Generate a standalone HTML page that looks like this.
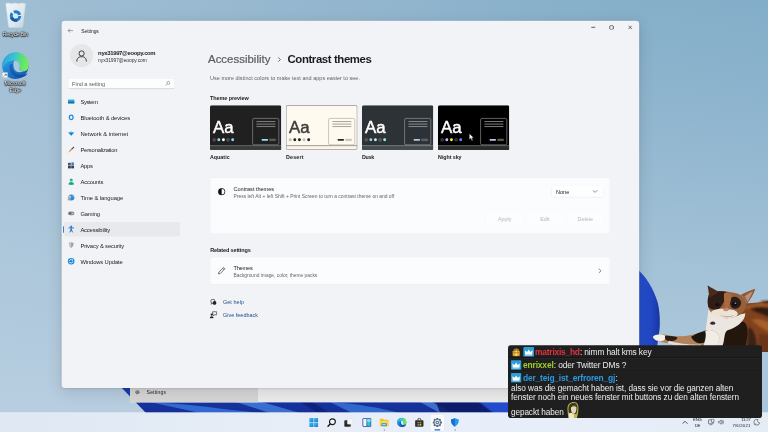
<!DOCTYPE html>
<html lang="en"><head><meta charset="utf-8"><title>Settings - Contrast themes</title>
<style>
html,body{margin:0;padding:0;width:768px;height:432px;overflow:hidden;background:#9dbdd4;}
#root{position:absolute;left:0;top:0;width:1920px;height:1080px;transform:scale(0.4);transform-origin:0 0;overflow:hidden;
font-family:"Liberation Sans",sans-serif;}
.b{position:absolute;box-sizing:border-box;}
.t{position:absolute;white-space:nowrap;}
#clip{position:relative;width:768px;height:432px;overflow:hidden;}
</style></head><body><div id="clip"><div id="root">
<svg class="b" style="left:0;top:0" width="1920" height="1080" viewBox="0 0 768 432">
<defs>
<linearGradient id="wp" x1="0" y1="0" x2="1" y2="0">
<stop offset="0" stop-color="#a0bed4"/><stop offset="0.45" stop-color="#93b6ce"/><stop offset="0.8" stop-color="#85afc9"/><stop offset="1" stop-color="#82adc8"/>
</linearGradient>
<linearGradient id="wp2" x1="0" y1="0" x2="0" y2="1">
<stop offset="0" stop-color="#b4cce0" stop-opacity="0"/><stop offset="0.25" stop-color="#b4cce0" stop-opacity="0.24"/><stop offset="0.65" stop-color="#b6cde0" stop-opacity="0.66"/><stop offset="1" stop-color="#bcd1e2" stop-opacity="0.92"/>
</linearGradient>
<linearGradient id="pet" x1="0" y1="0" x2="1" y2="0">
<stop offset="0" stop-color="#2a55d2"/><stop offset="0.7" stop-color="#2148c4"/><stop offset="1" stop-color="#1736a0"/>
</linearGradient>
<linearGradient id="strip" x1="0" y1="0" x2="0" y2="1">
<stop offset="0" stop-color="#1c3fb4"/><stop offset="1" stop-color="#142e94"/>
</linearGradient>
</defs>
<rect width="768" height="432" fill="url(#wp)"/>
<rect width="768" height="432" fill="url(#wp2)"/>
<path d="M118,384 L146,413 L768,413 L768,384 Z" fill="url(#strip)"/>
<path d="M150,402 C190,404 230,410 260,413 L200,413 Z" fill="#3a78e0" opacity="0.8"/>
<path d="M236,402 L262,402 L300,413 L270,413 Z" fill="#4a8ae8" opacity="0.7"/>
<path d="M300,402 L312,402 L330,413 L318,413 Z" fill="#0c1f70" opacity="0.7"/>
<path d="M330,402 C360,404 380,408 400,413 L352,413 Z" fill="#3f7fe4" opacity="0.7"/>
<path d="M420,402 L432,402 L452,413 L440,413 Z" fill="#5a96ec" opacity="0.6"/>
<path d="M436,402 L478,402 L492,413 L440,413 Z" fill="#0c1a64" opacity="0.85"/><path d="M480,402 L510,402 L510,413 L494,413 Z" fill="#2350d0" opacity="0.9"/>
<path d="M634,266.5 C646,275 654,290 657.7,302.4 C660,312 660.6,326 658.9,334 C657,348 652,380 648,413 L630,413 Z" fill="url(#pet)"/>
<path d="M762,345 L768,345 L768,413 L762,413 Z" fill="#a9c6dc"/>
</svg>
<svg class="b" style="left:10.00px;top:5.00px;" width="60.00" height="65.00" viewBox="0 0 96 104">
<defs><linearGradient id="rb" x1="0" y1="0" x2="1" y2="1"><stop offset="0" stop-color="#f2f6f9"/><stop offset="0.6" stop-color="#dfe7ed"/><stop offset="1" stop-color="#c4d0da"/></linearGradient></defs>
<path d="M7,6 L18,4 L30,7 L44,4 L58,7 L72,4 L86,7 L75,98 Q74,102 69,102 L24,102 Q19,102 18,98 Z" fill="url(#rb)" stroke="#d4dee6" stroke-width="1.5"/>
<circle cx="46" cy="56" r="17" fill="none" stroke="#1a7fd8" stroke-width="12" stroke-dasharray="28 7.6"/>
<path d="M30,62 A17,17 0 0 0 52,72" fill="none" stroke="#0c5aa8" stroke-width="12"/>
</svg>
<span id="t0" class="t" style="left:38.00px;transform:translateX(-50%);top:77.64px;font-size:13.25px;line-height:17.22px;font-weight:400;color:#fff;letter-spacing:-0.679px;text-shadow:0 0 3px #000,0 1px 3px #000,0 0 2px #000,0 0 4px rgba(0,0,0,0.8);">Recycle Bin</span>
<svg class="b" style="left:3.75px;top:130.00px;" width="68.75" height="68.75" viewBox="0 0 100 100">
<defs>
<linearGradient id="eg1" x1="0" y1="0" x2="0.6" y2="1"><stop offset="0" stop-color="#34b4e4"/><stop offset="0.5" stop-color="#2488d8"/><stop offset="1" stop-color="#155cb4"/></linearGradient>
<linearGradient id="eg2" x1="0" y1="0.3" x2="1" y2="0.5"><stop offset="0" stop-color="#2aa4dc"/><stop offset="0.42" stop-color="#3cc4d0"/><stop offset="0.72" stop-color="#5ce074"/><stop offset="1" stop-color="#78ec5c"/></linearGradient>
<linearGradient id="eg3" x1="0" y1="0" x2="1" y2="1"><stop offset="0" stop-color="#1a6cc4"/><stop offset="1" stop-color="#0c4494"/></linearGradient>
</defs>
<circle cx="50" cy="50" r="48" fill="url(#eg1)"/>
<path d="M3,44 C10,15 30,1 52,1 C80,1 99,22 99,46 C99,60 92,69 80,70 C68,71 62,64 66,56 C70,46 62,31 44,31 C26,31 10,42 3,62 Z" fill="url(#eg2)"/>
<path d="M30,46 C24,68 40,92 66,93 C80,93 90,86 95,76 C84,85 66,86 53,78 C41,70 37,56 42,42 Z" fill="url(#eg3)"/>
<path d="M46,32 C60,30 70,44 66,56 C62,64 68,71 80,70 C70,77 52,75 46,62 C42,52 42,40 46,32 Z" fill="#a9c8de"/>
</svg>
<div class="b" style="left:5.00px;top:181.25px;width:13.75px;height:13.75px;background:#fff;border:1px solid #999;"></div>
<svg class="b" style="left:6.50px;top:182.75px;" width="11.00" height="11.00" viewBox="0 0 10 10"><path d="M2,8 L8,2 M4,2 L8,2 L8,6" stroke="#1b5fc0" stroke-width="1.6" fill="none"/></svg>
<span id="t1" class="t" style="left:37.50px;transform:translateX(-50%);top:199.89px;font-size:13.25px;line-height:17.22px;font-weight:400;color:#fff;letter-spacing:-0.139px;text-shadow:0 0 3px #000,0 1px 3px #000,0 0 2px #000,0 0 4px rgba(0,0,0,0.8);">Microsoft</span>
<span id="t2" class="t" style="left:37.50px;transform:translateX(-50%);top:215.64px;font-size:13.25px;line-height:17.22px;font-weight:400;color:#fff;letter-spacing:-0.863px;text-shadow:0 0 3px #000,0 1px 3px #000,0 0 2px #000,0 0 4px rgba(0,0,0,0.8);">Edge</span>
<div class="b" style="left:325.00px;top:950.00px;width:1325.00px;height:55.50px;background:#ececec;"></div>
<div class="b" style="left:325.00px;top:950.00px;width:320.00px;height:55.50px;background:#d6d6d6;"></div>
<svg class="b" style="left:336.50px;top:973.50px;" width="13.00" height="13.00" viewBox="0 0 20 20"><circle cx="10" cy="10" r="6.5" fill="none" stroke="#333" stroke-width="2.4" stroke-dasharray="3.2 1.9"/><circle cx="10" cy="10" r="5" fill="none" stroke="#333" stroke-width="1.6"/><circle cx="10" cy="10" r="1.8" fill="none" stroke="#333" stroke-width="1.4"/></svg>
<span id="t3" class="t" style="left:366.50px;top:972.12px;font-size:12.50px;line-height:16.25px;font-weight:400;color:#222;letter-spacing:0.479px;">Settings</span>
<div class="b" style="left:153.50px;top:51.75px;width:1444.50px;height:918.25px;background:#f1f3f6;border-radius:8px;box-shadow:0 10px 40px rgba(0,0,0,0.12),0 2px 8px rgba(0,0,0,0.06),0 0 0 1px rgba(110,130,150,0.15);"></div>
<svg class="b" style="left:169.00px;top:71.00px;" width="14.00" height="11.00" viewBox="0 0 14 11"><path d="M6,1 L1.5,5.5 L6,10 M1.5,5.5 L13,5.5" fill="none" stroke="#444" stroke-width="1.2" stroke-linecap="round" stroke-linejoin="round"/></svg>
<span id="t4" class="t" style="left:203.00px;top:70.54px;font-size:12.25px;line-height:15.93px;font-weight:400;color:#1b1b1b;letter-spacing:-0.033px;">Settings</span>
<svg class="b" style="left:1476.50px;top:61.50px;" width="12.50" height="12.50" viewBox="0 0 10 10"><path d="M1,5 L9,5" stroke="#2a2a2a" stroke-width="1.5"/></svg>
<svg class="b" style="left:1523.25px;top:62.50px;" width="11.50" height="11.50" viewBox="0 0 10 10"><rect x="1" y="1" width="8" height="8" rx="1.8" fill="none" stroke="#2a2a2a" stroke-width="1.7"/></svg>
<svg class="b" style="left:1570.00px;top:62.50px;" width="11.00" height="11.00" viewBox="0 0 10 10"><path d="M1,1 L9,9 M9,1 L1,9" stroke="#2a2a2a" stroke-width="1.5"/></svg>
<div class="b" style="left:175.00px;top:110.00px;width:57.50px;height:57.50px;background:#e4e6e8;border-radius:50%;"></div>
<svg class="b" style="left:188.75px;top:122.50px;" width="30.00" height="32.50" viewBox="0 0 24 26"><circle cx="12" cy="8.5" r="5.2" fill="none" stroke="#2a2a2a" stroke-width="1.8"/><path d="M2.5,24 C2.5,17.5 6.5,15 12,15 C17.5,15 21.5,17.5 21.5,24" fill="none" stroke="#2a2a2a" stroke-width="1.8" stroke-linecap="round"/></svg>
<span id="t5" class="t" style="left:245.25px;top:122.66px;font-size:14.75px;line-height:19.18px;font-weight:700;color:#1b1b1b;letter-spacing:-0.811px;">nyx31997@eoopy.com</span>
<span id="t6" class="t" style="left:245.25px;top:143.04px;font-size:12.25px;line-height:15.93px;font-weight:400;color:#333;letter-spacing:-0.171px;">nyx31997@eoopy.com</span>
<div class="b" style="left:170.75px;top:195.75px;width:264.75px;height:26.25px;background:#fdfdfe;border-radius:4px;border-bottom:1.5px solid #8a8d91;box-shadow:0 0 0 1px rgba(0,0,0,0.05);"></div>
<span id="t7" class="t" style="left:180.25px;top:199.90px;font-size:14.00px;line-height:18.20px;font-weight:400;color:#5c5f63;letter-spacing:-0.111px;">Find a setting</span>
<svg class="b" style="left:413.00px;top:202.25px;" width="13.00" height="13.00" viewBox="0 0 12 12"><circle cx="7.2" cy="4.8" r="3.4" fill="none" stroke="#555" stroke-width="1"/><path d="M4.8,7.2 L1.2,10.8" stroke="#555" stroke-width="1" stroke-linecap="round"/></svg>
<div class="b" style="left:159.00px;top:555.00px;width:290.50px;height:35.50px;background:#e7e9ed;border-radius:4px;"></div>
<div class="b" style="left:157.75px;top:565.00px;width:2.50px;height:16.50px;background:#1a5fb4;border-radius:2px;"></div>
<span id="t8" class="t" style="left:201.00px;top:245.95px;font-size:14.50px;line-height:18.85px;font-weight:400;color:#1b1b1b;letter-spacing:-0.849px;">System</span>
<span id="t9" class="t" style="left:201.00px;top:285.88px;font-size:14.50px;line-height:18.85px;font-weight:400;color:#1b1b1b;letter-spacing:-0.219px;">Bluetooth &amp; devices</span>
<span id="t10" class="t" style="left:201.00px;top:325.80px;font-size:14.50px;line-height:18.85px;font-weight:400;color:#1b1b1b;letter-spacing:-0.002px;">Network &amp; internet</span>
<span id="t11" class="t" style="left:201.00px;top:365.72px;font-size:14.50px;line-height:18.85px;font-weight:400;color:#1b1b1b;letter-spacing:-0.460px;">Personalization</span>
<span id="t12" class="t" style="left:201.00px;top:405.65px;font-size:14.50px;line-height:18.85px;font-weight:400;color:#1b1b1b;letter-spacing:-0.578px;">Apps</span>
<span id="t13" class="t" style="left:201.00px;top:445.57px;font-size:14.50px;line-height:18.85px;font-weight:400;color:#1b1b1b;letter-spacing:-0.301px;">Accounts</span>
<span id="t14" class="t" style="left:201.00px;top:485.50px;font-size:14.50px;line-height:18.85px;font-weight:400;color:#1b1b1b;letter-spacing:-0.139px;">Time &amp; language</span>
<span id="t15" class="t" style="left:201.00px;top:525.42px;font-size:14.50px;line-height:18.85px;font-weight:400;color:#1b1b1b;letter-spacing:-0.381px;">Gaming</span>
<span id="t16" class="t" style="left:201.00px;top:565.35px;font-size:14.50px;line-height:18.85px;font-weight:400;color:#1b1b1b;letter-spacing:-0.382px;">Accessibility</span>
<span id="t17" class="t" style="left:201.00px;top:605.28px;font-size:14.50px;line-height:18.85px;font-weight:400;color:#1b1b1b;letter-spacing:-0.346px;">Privacy &amp; security</span>
<span id="t18" class="t" style="left:201.00px;top:645.20px;font-size:14.50px;line-height:18.85px;font-weight:400;color:#1b1b1b;letter-spacing:-0.294px;">Windows Update</span>
<svg class="b" style="left:167.50px;top:244.00px;" width="20.00" height="20.00" viewBox="0 0 20 20"><defs><linearGradient id="ni0" x1="0" y1="0" x2="0" y2="1"><stop offset="0" stop-color="#35c4dc"/><stop offset="1" stop-color="#0c78c0"/></linearGradient></defs><rect x="2" y="4.5" width="16" height="9.5" rx="1" fill="url(#ni0)"/><rect x="2" y="12.2" width="16" height="2.2" fill="#0a5a9c"/></svg>
<svg class="b" style="left:167.50px;top:283.92px;" width="20.00" height="20.00" viewBox="0 0 20 20"><rect x="5.4" y="3.6" width="9.2" height="11.4" rx="4.6" fill="#e8f2fc" stroke="#1a86e0" stroke-width="3.2"/></svg>
<svg class="b" style="left:167.50px;top:323.85px;" width="20.00" height="20.00" viewBox="0 0 20 20"><path d="M3,7.6 Q10,3.2 17,7.6 L10,15.2 Z" fill="#1a78d0"/><path d="M3,7.6 Q10,3.2 17,7.6 L15,9.8 Q10,6.8 5,9.8 Z" fill="#3cbcec"/></svg>
<svg class="b" style="left:167.50px;top:363.77px;" width="20.00" height="20.00" viewBox="0 0 20 20"><path d="M16.5,2.5 L18,4 L12.5,9.5 L10.5,7.5 Z" fill="#3a4a6a"/><path d="M10.5,7.5 L12.5,9.5 L8.5,13.5 L6.5,11.5 Z" fill="#c87838"/><path d="M6.5,11.5 L8.5,13.5 Q7,17 2.5,16.5 Q5,14.5 6.5,11.5 Z" fill="#f09838"/></svg>
<svg class="b" style="left:167.50px;top:403.70px;" width="20.00" height="20.00" viewBox="0 0 20 20"><rect x="2" y="3" width="7" height="6" fill="#50565e"/><rect x="2" y="10" width="7" height="7" fill="#3a4048"/><rect x="10" y="10" width="7" height="7" fill="#3a4048"/><rect x="10.5" y="2" width="6" height="7" fill="#2a7fd4"/></svg>
<svg class="b" style="left:167.50px;top:443.62px;" width="20.00" height="20.00" viewBox="0 0 20 20"><circle cx="10" cy="6" r="4" fill="#22b89a"/><path d="M3,17.5 Q3,11 10,11 Q17,11 17,17.5 Q10,19.5 3,17.5 Z" fill="#1aa888"/></svg>
<svg class="b" style="left:167.50px;top:483.55px;" width="20.00" height="20.00" viewBox="0 0 20 20"><circle cx="10.5" cy="9.5" r="7.5" fill="#2a88d8"/><path d="M4,6 Q8,3 10,7 Q11,11 7,13 Q3,12 4,6 Z" fill="#b0c4d4"/><path d="M12,3 Q17,5 17,10 Q14,9 12,3 Z" fill="#7fd0f0"/><circle cx="5" cy="14" r="3.5" fill="#9aa4ae"/></svg>
<svg class="b" style="left:167.50px;top:523.47px;" width="20.00" height="20.00" viewBox="0 0 20 20"><rect x="2" y="6" width="16" height="9" rx="4.5" fill="#8a9098"/><circle cx="7" cy="10.5" r="2" fill="#4a5058"/><circle cx="13.5" cy="10.5" r="1.6" fill="#c8ccd0"/></svg>
<svg class="b" style="left:167.50px;top:563.40px;" width="20.00" height="20.00" viewBox="0 0 20 20"><circle cx="10" cy="3.2" r="2.2" fill="#1a6fd4"/><path d="M4.6,6.8 L15.4,6.8 M10,6.8 L10,11.4 M10,11.4 L6.8,17 M10,11.4 L13.2,17" stroke="#1a6fd4" stroke-width="2.5" stroke-linecap="round" fill="none"/></svg>
<svg class="b" style="left:167.50px;top:603.33px;" width="20.00" height="20.00" viewBox="0 0 20 20"><path d="M10,2.6 L16.2,4.8 Q16.6,12.4 10,16.8 Q3.4,12.4 3.8,4.8 Z" fill="#9aa0a6"/><path d="M10,2.6 L10,16.8 Q3.4,12.4 3.8,4.8 Z" fill="#c4c8cc"/></svg>
<svg class="b" style="left:167.50px;top:643.25px;" width="20.00" height="20.00" viewBox="0 0 20 20"><circle cx="10" cy="10" r="8.2" fill="#1a86dc"/><path d="M5.5,10 A4.5,4.5 0 0 1 13.5,7.2 M14.5,10 A4.5,4.5 0 0 1 6.5,12.8" fill="none" stroke="#fff" stroke-width="1.8"/><path d="M14.2,4.5 L14,8 L10.8,7.4 Z M5.8,15.5 L6,12 L9.2,12.6 Z" fill="#fff"/></svg>
<span id="t19" class="t" style="left:520.00px;top:130.47px;font-size:28.50px;line-height:37.05px;font-weight:400;color:#5a5d61;letter-spacing:0.080px;-webkit-text-stroke:0.55px #5a5d61;">Accessibility</span>
<svg class="b" style="left:692.50px;top:141.75px;" width="11.00" height="13.75" viewBox="0 0 8 10"><path d="M2.4,1.6 L5.8,5 L2.4,8.4" fill="none" stroke="#4a4d51" stroke-width="1.5" stroke-linecap="round" stroke-linejoin="round"/></svg>
<span id="t20" class="t" style="left:718.75px;top:130.47px;font-size:28.50px;line-height:37.05px;font-weight:700;color:#1b1b1b;letter-spacing:-0.993px;">Contrast themes</span>
<span id="t21" class="t" style="left:525.00px;top:186.31px;font-size:13.75px;line-height:17.88px;font-weight:400;color:#5f6368;letter-spacing:0.046px;">Use more distinct colors to make text and apps easier to see.</span>
<span id="t22" class="t" style="left:525.00px;top:238.31px;font-size:13.75px;line-height:17.88px;font-weight:700;color:#1b1b1b;letter-spacing:-0.220px;">Theme preview</span>
<svg class="b" style="left:524.50px;top:263.00px;" width="178.50" height="111.50" viewBox="0 0 71.4 44.6"><rect x="0" y="0" width="71.4" height="44.6" rx="1.6" fill="#202020"/><rect x="0" y="40.4" width="71.4" height="4.2" fill="#3a3a3a"/><rect x="0" y="40.2" width="71.4" height="0.7" fill="#7a7a7a"/><rect x="42.6" y="13.2" width="26.2" height="26.4" rx="1.4" fill="#202020" stroke="#9a9a9a" stroke-width="0.6"/><rect x="46.4" y="15.95" width="19" height="0.9" fill="#8a8a8a"/><rect x="46.4" y="18.45" width="19" height="0.9" fill="#8a8a8a"/><rect x="46.4" y="20.95" width="19" height="0.9" fill="#8a8a8a"/><rect x="51.6" y="33.7" width="6.4" height="1.8" rx="0.6" fill="#8ee3f0"/><rect x="59.4" y="33.7" width="6.4" height="1.8" rx="0.6" fill="#555" stroke="#9a9a9a" stroke-width="0.25"/><circle cx="4.20" cy="34.6" r="1.25" fill="none" stroke="#aaa" stroke-width="0.45"/><circle cx="8.82" cy="34.6" r="1.45" fill="#8ee3f0"/><circle cx="13.44" cy="34.6" r="1.45" fill="#ffffff"/><circle cx="18.06" cy="34.6" r="1.25" fill="none" stroke="#aaa" stroke-width="0.45"/><circle cx="22.68" cy="34.6" r="1.45" fill="#75e0ef"/><text x="3.0" y="28.0" font-family="Liberation Sans, sans-serif" font-size="17.2" fill="#ffffff" stroke="#ffffff" stroke-width="0.45" textLength="20.6" lengthAdjust="spacingAndGlyphs">Aa</text></svg>
<span id="t23" class="t" style="left:525.00px;top:384.14px;font-size:13.25px;line-height:17.22px;font-weight:700;color:#1b1b1b;letter-spacing:0.058px;">Aquatic</span>
<svg class="b" style="left:714.50px;top:263.00px;filter:drop-shadow(0 0 1.2px rgba(0,0,0,0.55));" width="178.50" height="111.50" viewBox="0 0 71.4 44.6"><rect x="0" y="0" width="71.4" height="44.6" rx="1.6" fill="#fffaef"/><rect x="0" y="40.4" width="71.4" height="4.2" fill="#fbf6ea"/><rect x="0" y="40.2" width="71.4" height="0.7" fill="#7a766c"/><rect x="42.6" y="13.2" width="26.2" height="26.4" rx="1.4" fill="#fffaef" stroke="#a8a296" stroke-width="0.6"/><rect x="46.4" y="15.95" width="19" height="0.9" fill="#a09a8e"/><rect x="46.4" y="18.45" width="19" height="0.9" fill="#a09a8e"/><rect x="46.4" y="20.95" width="19" height="0.9" fill="#a09a8e"/><rect x="51.6" y="33.7" width="6.4" height="1.8" rx="0.6" fill="#2a2a2a"/><rect x="59.4" y="33.7" width="6.4" height="1.8" rx="0.6" fill="#d0cabc" stroke="#a8a296" stroke-width="0.25"/><circle cx="4.20" cy="34.6" r="1.25" fill="#d8d2c6" stroke="#a8a296" stroke-width="0.45"/><circle cx="8.82" cy="34.6" r="1.45" fill="#222"/><circle cx="13.44" cy="34.6" r="1.45" fill="#1a1a1a"/><circle cx="18.06" cy="34.6" r="1.25" fill="#d8d2c6" stroke="#a8a296" stroke-width="0.45"/><circle cx="22.68" cy="34.6" r="1.45" fill="#222"/><text x="3.0" y="28.0" font-family="Liberation Sans, sans-serif" font-size="17.2" fill="#3d3d3d" stroke="#3d3d3d" stroke-width="0.45" textLength="20.6" lengthAdjust="spacingAndGlyphs">Aa</text><rect x="0.3" y="0.3" width="70.8" height="44" rx="1.5" fill="none" stroke="#8c887e" stroke-width="0.6"/></svg>
<span id="t24" class="t" style="left:715.00px;top:384.14px;font-size:13.25px;line-height:17.22px;font-weight:700;color:#1b1b1b;letter-spacing:0.458px;">Desert</span>
<svg class="b" style="left:904.50px;top:263.00px;" width="178.50" height="111.50" viewBox="0 0 71.4 44.6"><rect x="0" y="0" width="71.4" height="44.6" rx="1.6" fill="#2d3236"/><rect x="0" y="40.4" width="71.4" height="4.2" fill="#454a4e"/><rect x="0" y="40.2" width="71.4" height="0.7" fill="#8a8f93"/><rect x="42.6" y="13.2" width="26.2" height="26.4" rx="1.4" fill="#2d3236" stroke="#a0a4a8" stroke-width="0.6"/><rect x="46.4" y="15.95" width="19" height="0.9" fill="#8f9498"/><rect x="46.4" y="18.45" width="19" height="0.9" fill="#8f9498"/><rect x="46.4" y="20.95" width="19" height="0.9" fill="#8f9498"/><rect x="51.6" y="33.7" width="6.4" height="1.8" rx="0.6" fill="#abcfef"/><rect x="59.4" y="33.7" width="6.4" height="1.8" rx="0.6" fill="#555a5e" stroke="#a0a4a8" stroke-width="0.25"/><circle cx="4.20" cy="34.6" r="1.25" fill="none" stroke="#aaa" stroke-width="0.45"/><circle cx="8.82" cy="34.6" r="1.45" fill="#a6cbec"/><circle cx="13.44" cy="34.6" r="1.45" fill="#b6f6f0"/><circle cx="18.06" cy="34.6" r="1.25" fill="none" stroke="#aaa" stroke-width="0.45"/><circle cx="22.68" cy="34.6" r="1.45" fill="#a0ead8"/><text x="3.0" y="28.0" font-family="Liberation Sans, sans-serif" font-size="17.2" fill="#ffffff" stroke="#ffffff" stroke-width="0.45" textLength="20.6" lengthAdjust="spacingAndGlyphs">Aa</text></svg>
<span id="t25" class="t" style="left:905.00px;top:384.14px;font-size:13.25px;line-height:17.22px;font-weight:700;color:#1b1b1b;letter-spacing:-0.602px;">Dusk</span>
<svg class="b" style="left:1094.75px;top:263.00px;" width="178.50" height="111.50" viewBox="0 0 71.4 44.6"><rect x="0" y="0" width="71.4" height="44.6" rx="1.6" fill="#000000"/><rect x="0" y="40.4" width="71.4" height="4.2" fill="#2a2a2a"/><rect x="0" y="40.2" width="71.4" height="0.7" fill="#7a7a7a"/><rect x="42.6" y="13.2" width="26.2" height="26.4" rx="1.4" fill="#000" stroke="#a0a0a0" stroke-width="0.6"/><rect x="46.4" y="15.95" width="19" height="0.9" fill="#8a8a8a"/><rect x="46.4" y="18.45" width="19" height="0.9" fill="#8a8a8a"/><rect x="46.4" y="20.95" width="19" height="0.9" fill="#8a8a8a"/><rect x="51.6" y="33.7" width="6.4" height="1.8" rx="0.6" fill="#d6b4fd"/><rect x="59.4" y="33.7" width="6.4" height="1.8" rx="0.6" fill="#5a5a3a" stroke="#a0a0a0" stroke-width="0.25"/><circle cx="4.20" cy="34.6" r="1.25" fill="none" stroke="#aaa" stroke-width="0.45"/><circle cx="8.82" cy="34.6" r="1.45" fill="#d6b4fd"/><circle cx="13.44" cy="34.6" r="1.45" fill="#ffee32"/><circle cx="18.06" cy="34.6" r="1.25" fill="none" stroke="#aaa" stroke-width="0.45"/><circle cx="22.68" cy="34.6" r="1.45" fill="#8080ff"/><text x="3.0" y="28.0" font-family="Liberation Sans, sans-serif" font-size="17.2" fill="#ffffff" stroke="#ffffff" stroke-width="0.45" textLength="20.6" lengthAdjust="spacingAndGlyphs">Aa</text></svg>
<span id="t26" class="t" style="left:1095.25px;top:384.14px;font-size:13.25px;line-height:17.22px;font-weight:700;color:#1b1b1b;letter-spacing:-0.127px;">Night sky</span>
<svg class="b" style="left:1171.50px;top:333.00px;" width="14.00" height="20.50" viewBox="0 0 12 18"><path d="M1,1 L1,14 L4.2,11 L6.6,16.6 L8.8,15.6 L6.4,10.2 L10.8,10 Z" fill="#fff" stroke="#222" stroke-width="0.9" stroke-linejoin="round"/></svg>
<div class="b" style="left:525.50px;top:444.50px;width:998.00px;height:139.50px;background:#fbfcfd;border-radius:4px;box-shadow:0 0 0 1px rgba(0,0,0,0.025);"></div>
<svg class="b" style="left:543.50px;top:468.50px;" width="20.50" height="20.50" viewBox="0 0 20 20"><circle cx="10" cy="10" r="8" fill="#fff" stroke="#111" stroke-width="2"/><path d="M10,2 A8,8 0 0 0 10,18 Z" fill="#111"/></svg>
<span id="t27" class="t" style="left:583.75px;top:463.03px;font-size:14.00px;line-height:18.20px;font-weight:400;color:#1b1b1b;letter-spacing:-0.081px;">Contrast themes</span>
<span id="t28" class="t" style="left:583.75px;top:482.63px;font-size:12.30px;line-height:15.99px;font-weight:400;color:#62666a;letter-spacing:0.030px;">Press left Alt + left Shift + Print Screen to turn a contrast theme on and off</span>
<div class="b" style="left:1378.50px;top:464.50px;width:129.50px;height:27.50px;background:#fefefe;border-radius:4px;box-shadow:0 0 0 1px rgba(0,0,0,0.02),0 1px 0 0.5px rgba(0,0,0,0.06);"></div>
<span id="t29" class="t" style="left:1390.00px;top:471.06px;font-size:13.75px;line-height:17.88px;font-weight:400;color:#1b1b1b;letter-spacing:0.094px;">None</span>
<svg class="b" style="left:1481.00px;top:474.00px;" width="13.50" height="9.50" viewBox="0 0 10 7"><path d="M1.4,1.6 L5,5.2 L8.6,1.6" fill="none" stroke="#444" stroke-width="1.1" stroke-linecap="round" stroke-linejoin="round"/></svg>
<div class="b" style="left:1215.00px;top:531.00px;width:93.50px;height:32.50px;background:#fcfdfe;border-radius:4px;box-shadow:0 0 0 1px rgba(0,0,0,0.018);"></div>
<span id="t30" class="t" style="left:1261.75px;transform:translateX(-50%);top:538.56px;font-size:13.75px;line-height:17.88px;font-weight:400;color:#b4b7ba;letter-spacing:-0.081px;">Apply</span>
<div class="b" style="left:1315.50px;top:531.00px;width:93.50px;height:32.50px;background:#fcfdfe;border-radius:4px;box-shadow:0 0 0 1px rgba(0,0,0,0.018);"></div>
<span id="t31" class="t" style="left:1362.25px;transform:translateX(-50%);top:538.56px;font-size:13.75px;line-height:17.88px;font-weight:400;color:#b4b7ba;letter-spacing:-0.051px;">Edit</span>
<div class="b" style="left:1417.50px;top:531.00px;width:91.50px;height:32.50px;background:#fcfdfe;border-radius:4px;box-shadow:0 0 0 1px rgba(0,0,0,0.018);"></div>
<span id="t32" class="t" style="left:1463.25px;transform:translateX(-50%);top:538.56px;font-size:13.75px;line-height:17.88px;font-weight:400;color:#b4b7ba;letter-spacing:-0.125px;">Delete</span>
<span id="t33" class="t" style="left:525.50px;top:616.31px;font-size:13.75px;line-height:17.88px;font-weight:700;color:#1b1b1b;letter-spacing:-0.326px;">Related settings</span>
<div class="b" style="left:525.50px;top:642.50px;width:998.00px;height:67.00px;background:#fbfcfd;border-radius:4px;box-shadow:0 0 0 1px rgba(0,0,0,0.025);"></div>
<svg class="b" style="left:543.00px;top:666.00px;" width="22.00" height="22.00" viewBox="0 0 20 20"><path d="M14.5,2.5 L17.5,5.5 L7,16 L2.8,17.2 L4,13 Z M12.5,4.5 L15.5,7.5" fill="none" stroke="#333" stroke-width="1.5" stroke-linejoin="round"/></svg>
<span id="t34" class="t" style="left:583.75px;top:659.90px;font-size:14.00px;line-height:18.20px;font-weight:400;color:#1b1b1b;letter-spacing:-0.513px;">Themes</span>
<span id="t35" class="t" style="left:583.75px;top:681.73px;font-size:12.15px;line-height:15.80px;font-weight:400;color:#62666a;letter-spacing:0.008px;">Background image, color, theme packs</span>
<svg class="b" style="left:1495.00px;top:670.00px;" width="10.00" height="14.00" viewBox="0 0 8 10"><path d="M2.2,1.2 L6,5 L2.2,8.8" fill="none" stroke="#333" stroke-width="1.2" stroke-linecap="round" stroke-linejoin="round"/></svg>
<svg class="b" style="left:524.50px;top:745.50px;" width="18.00" height="18.00" viewBox="0 0 20 20"><circle cx="8" cy="8" r="5.8" fill="none" stroke="#222" stroke-width="1.8"/><circle cx="12.5" cy="12.5" r="5.2" fill="#222"/><path d="M3,13 L2,17 L6,15.5" fill="#222"/></svg>
<span id="t36" class="t" style="left:557.50px;top:746.48px;font-size:13.50px;line-height:17.55px;font-weight:400;color:#234f8e;letter-spacing:0.182px;">Get help</span>
<svg class="b" style="left:524.00px;top:777.00px;" width="19.00" height="20.00" viewBox="0 0 20 20"><circle cx="5.5" cy="9.5" r="3" fill="#222"/><path d="M0.5,19 Q0.5,13.5 5.5,13.5 Q10.5,13.5 10.5,19 Z" fill="#222"/><path d="M8,2 L18.5,2 L18.5,10 L13,10 L10.5,12.5 L10.5,10 L8,10 Z" fill="none" stroke="#222" stroke-width="1.6" stroke-linejoin="round"/></svg>
<span id="t37" class="t" style="left:557.50px;top:778.98px;font-size:13.50px;line-height:17.55px;font-weight:400;color:#234f8e;letter-spacing:0.092px;">Give feedback</span>
<div class="b" style="left:0.00px;top:1030.75px;width:1920.00px;height:49.25px;background:linear-gradient(90deg,#dfe8f3 0%,#e6edf7 35%,#e9effa 60%,#e4ecf6 100%);border-top:1px solid rgba(255,255,255,0.6);"></div>
<div class="b" style="left:1076.00px;top:1036.50px;width:34.00px;height:40.00px;background:rgba(255,255,255,0.75);border-radius:4px;box-shadow:0 0 0 1px rgba(0,0,0,0.04);"></div>
<svg class="b" style="left:771.75px;top:1043.50px;" width="24.50" height="24.50" viewBox="0 0 20 20"><defs><linearGradient id="st" x1="0" y1="0" x2="1" y2="1"><stop offset="0" stop-color="#4cc2f4"/><stop offset="1" stop-color="#1478d4"/></linearGradient></defs><rect x="1" y="1" width="8.5" height="8.5" rx="0.6" fill="url(#st)"/><rect x="10.5" y="1" width="8.5" height="8.5" rx="0.6" fill="url(#st)"/><rect x="1" y="10.5" width="8.5" height="8.5" rx="0.6" fill="url(#st)"/><rect x="10.5" y="10.5" width="8.5" height="8.5" rx="0.6" fill="url(#st)"/></svg>
<svg class="b" style="left:817.00px;top:1043.50px;" width="24.50" height="24.50" viewBox="0 0 20 20"><circle cx="11.5" cy="8.5" r="6" fill="#f4f7fb" stroke="#1a1a1a" stroke-width="2.4"/><path d="M7,13 L2.5,17.5" stroke="#1a1a1a" stroke-width="3" stroke-linecap="round"/></svg>
<svg class="b" style="left:858.75px;top:1043.50px;" width="24.50" height="24.50" viewBox="0 0 20 20"><rect x="1.5" y="5.5" width="13" height="13" rx="1.6" fill="#2a2a2a"/><rect x="7.5" y="2" width="11.5" height="11.5" rx="1.6" fill="#f4f6f8" stroke="#c4c8cc" stroke-width="0.6"/></svg>
<svg class="b" style="left:904.75px;top:1043.50px;" width="24.50" height="24.50" viewBox="0 0 20 20"><rect x="1" y="1.5" width="18" height="17" rx="2" fill="#1a4a9c"/><rect x="2.6" y="3" width="6.6" height="14" rx="0.8" fill="#f6f9fc"/><rect x="10.6" y="3" width="6.8" height="14" rx="0.8" fill="#36c0d8"/><rect x="10.6" y="3" width="6.8" height="6" rx="0.8" fill="#7fe0ec"/></svg>
<svg class="b" style="left:948.25px;top:1043.50px;" width="24.50" height="24.50" viewBox="0 0 20 20"><path d="M1,4 Q1,2.5 2.5,2.5 L8,2.5 L10,4.5 L17.5,4.5 Q19,4.5 19,6 L19,16 Q19,17.5 17.5,17.5 L2.5,17.5 Q1,17.5 1,16 Z" fill="#f6c02a"/><rect x="1" y="7" width="18" height="10.5" rx="1.4" fill="#fcd84a"/><rect x="4.5" y="11.5" width="11" height="6" fill="#2a8fe0"/><rect x="6.5" y="13.5" width="7" height="2" fill="#cfe8fa"/></svg>
<svg class="b" style="left:992.25px;top:1043.50px;" width="24.50" height="24.50" viewBox="0 0 100 100">
<defs>
<linearGradient id="egA" x1="0" y1="0" x2="0.6" y2="1"><stop offset="0" stop-color="#34b4e4"/><stop offset="0.5" stop-color="#2488d8"/><stop offset="1" stop-color="#155cb4"/></linearGradient>
<linearGradient id="egB" x1="0" y1="0.3" x2="1" y2="0.5"><stop offset="0" stop-color="#2aa4dc"/><stop offset="0.42" stop-color="#3cc4d0"/><stop offset="0.72" stop-color="#5ce074"/><stop offset="1" stop-color="#78ec5c"/></linearGradient>
<linearGradient id="eg3" x1="0" y1="0" x2="1" y2="1"><stop offset="0" stop-color="#1a6cc4"/><stop offset="1" stop-color="#0c4494"/></linearGradient>
</defs>
<circle cx="50" cy="50" r="48" fill="url(#egA)"/>
<path d="M3,44 C10,15 30,1 52,1 C80,1 99,22 99,46 C99,60 92,69 80,70 C68,71 62,64 66,56 C70,46 62,31 44,31 C26,31 10,42 3,62 Z" fill="url(#egB)"/>
<path d="M30,46 C24,68 40,92 66,93 C80,93 90,86 95,76 C84,85 66,86 53,78 C41,70 37,56 42,42 Z" fill="url(#eg3)"/>
<path d="M46,32 C60,30 70,44 66,56 C62,64 68,71 80,70 C70,77 52,75 46,62 C42,52 42,40 46,32 Z" fill="#e6edf7"/>
</svg>
<svg class="b" style="left:1035.75px;top:1043.50px;" width="24.50" height="24.50" viewBox="0 0 20 20"><path d="M6.5,6 Q6.5,1.5 10,1.5 Q13.5,1.5 13.5,6" fill="none" stroke="#2a2a2a" stroke-width="1.6"/><rect x="1.5" y="5.5" width="17" height="13" rx="1.6" fill="#2c2c2c"/><rect x="6" y="8.5" width="3.4" height="3.4" fill="#f25022"/><rect x="10.6" y="8.5" width="3.4" height="3.4" fill="#7fba00"/><rect x="6" y="13" width="3.4" height="3.4" fill="#00a4ef"/><rect x="10.6" y="13" width="3.4" height="3.4" fill="#ffb900"/></svg>
<svg class="b" style="left:1080.75px;top:1043.50px;" width="24.50" height="24.50" viewBox="0 0 20 20"><g transform="translate(10,10)"><rect x="-2.1" y="-9.4" width="4.2" height="5" rx="0.8" fill="#5a6066" transform="rotate(0)"/><rect x="-2.1" y="-9.4" width="4.2" height="5" rx="0.8" fill="#5a6066" transform="rotate(45)"/><rect x="-2.1" y="-9.4" width="4.2" height="5" rx="0.8" fill="#5a6066" transform="rotate(90)"/><rect x="-2.1" y="-9.4" width="4.2" height="5" rx="0.8" fill="#5a6066" transform="rotate(135)"/><rect x="-2.1" y="-9.4" width="4.2" height="5" rx="0.8" fill="#5a6066" transform="rotate(180)"/><rect x="-2.1" y="-9.4" width="4.2" height="5" rx="0.8" fill="#5a6066" transform="rotate(225)"/><rect x="-2.1" y="-9.4" width="4.2" height="5" rx="0.8" fill="#5a6066" transform="rotate(270)"/><rect x="-2.1" y="-9.4" width="4.2" height="5" rx="0.8" fill="#5a6066" transform="rotate(315)"/><circle r="6.8" fill="#6a7076"/><circle r="5.4" fill="#dfe6ee"/><circle r="3.6" fill="#2a84dc"/><circle r="1.6" fill="#e8eef6"/></g></svg>
<svg class="b" style="left:1125.25px;top:1043.50px;" width="24.50" height="24.50" viewBox="0 0 20 20"><path d="M10,1.5 L18,4 Q18.5,13.5 10,18.8 Q1.5,13.5 2,4 Z" fill="#2a9ae8"/><path d="M10,1.5 L10,18.8 Q1.5,13.5 2,4 Z" fill="#1670d0"/></svg>
<div class="b" style="left:1085.50px;top:1072.50px;width:15.00px;height:3.00px;background:#1a6fd4;border-radius:2px;"></div>
<div class="b" style="left:958.50px;top:1074.00px;width:4.50px;height:2.00px;background:#7a8088;border-radius:2px;"></div>
<div class="b" style="left:1135.50px;top:1074.00px;width:4.50px;height:2.00px;background:#7a8088;border-radius:2px;"></div>
<svg class="b" style="left:1704.50px;top:1051.00px;" width="15.00" height="9.50" viewBox="0 0 10 6"><path d="M1.2,5 L5,1.2 L8.8,5" fill="none" stroke="#222" stroke-width="1.2" stroke-linecap="round" stroke-linejoin="round"/></svg>
<span id="t38" class="t" style="left:1743.50px;transform:translateX(-50%);top:1041.51px;font-size:10.75px;line-height:13.97px;font-weight:400;color:#222;letter-spacing:-0.599px;">ENG</span>
<span id="t39" class="t" style="left:1743.50px;transform:translateX(-50%);top:1058.01px;font-size:10.75px;line-height:13.97px;font-weight:400;color:#222;letter-spacing:-0.719px;">DE</span>
<svg class="b" style="left:1769.00px;top:1046.00px;" width="19.00" height="18.00" viewBox="0 0 20 20"><rect x="2" y="4" width="13" height="11" rx="1.4" fill="none" stroke="#333" stroke-width="1.6"/><rect x="10" y="2" width="7" height="9" rx="1" fill="#e4ecf6" stroke="#333" stroke-width="1.4"/><path d="M5,18 L12,18" stroke="#333" stroke-width="1.6"/></svg>
<svg class="b" style="left:1794.00px;top:1047.00px;" width="18.00" height="16.50" viewBox="0 0 20 20"><path d="M2,7.5 L5.5,7.5 L10,3.5 L10,16.5 L5.5,12.5 L2,12.5 Z" fill="none" stroke="#333" stroke-width="1.5" stroke-linejoin="round"/><path d="M13,6.5 Q15.5,10 13,13.5 M15.6,4.5 Q19.4,10 15.6,15.5" fill="none" stroke="#333" stroke-width="1.4" stroke-linecap="round"/></svg>
<span id="t40" class="t" style="right:43.50px;top:1041.51px;font-size:10.75px;line-height:13.97px;font-weight:400;color:#222;letter-spacing:-0.522px;">11:27</span>
<span id="t41" class="t" style="right:43.50px;top:1058.01px;font-size:10.75px;line-height:13.97px;font-weight:400;color:#222;letter-spacing:0.455px;">7/6/2021</span>
<svg class="b" style="left:1883.00px;top:1045.50px;" width="18.50" height="19.00" viewBox="0 0 20 20"><path d="M13,2.5 A8,8 0 1 0 17.5,12 A6,6 0 0 1 13,2.5 Z" fill="none" stroke="#333" stroke-width="1.5" stroke-linejoin="round"/><path d="M3,17 L7,14" stroke="#333" stroke-width="1.4"/></svg>
<svg class="b" style="left:1620.00px;top:690.00px;" width="300.00" height="190.00" viewBox="0 0 682 432">
<defs><filter id="cb" x="-5%" y="-5%" width="110%" height="110%"><feGaussianBlur stdDeviation="3.4"/></filter>
<filter id="cb2" x="-20%" y="-20%" width="140%" height="140%"><feGaussianBlur stdDeviation="7"/></filter></defs>
<g filter="url(#cb)">
<!-- body -->
<path d="M520,215 L538,152 C580,160 630,150 730,137 L730,450 L390,450 C400,350 440,300 520,215 Z" fill="#80421f"/>
<g filter="url(#cb2)">
<path d="M575,185 C610,170 650,175 730,190 L730,250 C650,215 610,205 575,185 Z" fill="#2e1a10"/>
<path d="M556,168 C600,160 650,150 730,144 L730,172 C650,168 600,175 556,192 Z" fill="#9c5a2c"/>
<path d="M590,250 C620,235 660,250 730,280 L730,340 C650,300 620,280 590,250 Z" fill="#a45e2c"/>
<path d="M570,290 C600,300 620,340 620,450 L560,450 Z" fill="#3a2012"/>
<path d="M630,330 C650,325 670,335 730,350 L730,450 L630,450 Z" fill="#6a3416"/>
<path d="M636,146 C655,142 670,140 730,139 L730,160 C668,158 652,154 636,146 Z" fill="#4a2410"/>
</g>
<!-- dark lower patch -->
<path d="M440,300 C480,262 545,235 560,280 C575,330 560,380 540,450 L400,450 C400,360 415,325 440,300 Z" fill="#221611"/>
<!-- white chest -->
<path d="M343,190 C400,228 500,228 553,212 C553,258 500,296 452,308 C422,330 450,370 397,450 L300,450 C320,360 330,300 343,195 Z" fill="#ebe6df"/>
<ellipse cx="368" cy="268" rx="14" ry="9" fill="#3a2a2a"/>
<!-- arm -->
<path d="M30,342 C50,328 90,330 130,340 C200,348 270,335 330,308 C370,300 410,320 405,360 C400,392 360,450 300,450 C230,408 160,400 110,382 C70,374 30,366 30,342 Z" fill="#b4825a"/>
<path d="M28,346 C40,328 80,330 98,340 C102,352 96,366 80,370 C55,372 30,364 28,346 Z" fill="#f4f0ea"/>
<path d="M98,340 C120,338 150,342 168,350 C162,368 140,374 110,368 C96,362 94,350 98,340 Z" fill="#2a1c16"/>
<path d="M245,345 C270,330 300,318 330,310 C345,330 340,362 318,380 C290,386 262,380 245,345 Z" fill="#1e1410"/>
<path d="M325,312 C360,298 410,318 405,360 C400,395 360,450 300,450 C320,380 335,345 325,312 Z" fill="#f0ece6"/>
<path d="M110,382 C160,398 230,408 300,450 L300,390 C240,392 170,384 120,368 Z" fill="#e4ded6"/>
<!-- head -->
<path d="M345,110 C360,82 420,80 470,92 C520,96 562,120 558,165 C554,205 520,236 450,240 C400,242 350,215 342,175 C338,150 338,130 345,110 Z" fill="#96603a"/>
<path d="M345,110 C360,84 420,82 446,92 C442,130 428,160 405,188 C380,194 352,192 342,172 C338,150 338,130 345,110 Z" fill="#2e1c14"/>
<path d="M474,122 C494,112 522,122 530,150 C526,180 502,192 480,184 C464,170 462,140 474,122 Z" fill="#2a1a14"/>
<path d="M432,98 C448,92 468,96 476,110 C470,150 462,176 448,192 C436,180 430,150 432,98 Z" fill="#a86a40"/>
<path d="M370,196 C400,180 445,186 480,192 C510,200 520,216 500,230 C460,246 400,244 368,224 C356,212 358,200 370,196 Z" fill="#ece2d6"/>
<path d="M428,184 C440,178 454,180 462,188 C458,202 438,204 428,194 Z" fill="#c08472"/>
<path d="M410,222 C430,232 470,232 490,220 C480,236 430,240 410,222 Z" fill="#b09a8a"/>
<ellipse cx="492" cy="160" rx="14" ry="12" fill="#120e12"/>
<ellipse cx="497" cy="155" rx="5" ry="4" fill="#8aa0b0"/>
<ellipse cx="394" cy="162" rx="12" ry="9" fill="#140e0a"/>
<!-- ears -->
<path d="M338,54 C352,62 384,80 406,92 C384,100 362,112 350,130 C346,104 344,80 338,54 Z" fill="#4a2c1c"/>
<path d="M610,72 C590,78 556,92 526,108 C548,120 560,140 560,162 C580,134 600,104 610,72 Z" fill="#8e5836"/>
<path d="M596,86 C582,92 562,104 548,116 C558,126 562,138 564,148 C576,128 588,106 596,86 Z" fill="#bc9076"/>
</g>
</svg>
<div class="b" style="left:1270.00px;top:863.00px;width:634.50px;height:182.00px;background:#1f1f20;border-radius:7px;"></div>
<div class="b" style="left:1270.00px;top:894.00px;width:634.50px;height:1.00px;background:#0c0c0c;"></div>
<div class="b" style="left:1270.00px;top:895.00px;width:634.50px;height:1.00px;background:#343436;"></div>
<div class="b" style="left:1270.00px;top:925.75px;width:634.50px;height:1.00px;background:#0c0c0c;"></div>
<div class="b" style="left:1270.00px;top:926.75px;width:634.50px;height:1.00px;background:#343436;"></div>
<svg class="b" style="left:1279.50px;top:868.50px;" width="21.50" height="22.50" viewBox="0 0 18 20"><path d="M3,5 Q9,-1 15,5 L15,8 L3,8 Z" fill="#d8a838"/><rect x="1" y="7" width="16" height="12" rx="1.2" fill="#e8b830" stroke="#6a4a14" stroke-width="1.2"/><rect x="7.4" y="7" width="3.2" height="12" fill="#f8e08a"/><rect x="1" y="10.4" width="16" height="2.2" fill="#b07c1c"/><path d="M4,6 Q9,1 14,6" fill="none" stroke="#6a4a14" stroke-width="1.4"/></svg>
<svg class="b" style="left:1307.50px;top:866.50px;" width="27.50" height="25.50" viewBox="0 0 20 18"><rect x="0" y="0" width="20" height="18" rx="2" fill="#2a9fd8"/><path d="M3.5,13.5 L3,6 L7,9 L10,4.5 L13,9 L17,6 L16.5,13.5 Z" fill="#fff"/><rect x="3.5" y="14" width="13" height="1.4" fill="#fff"/></svg>
<span id="t42" class="t" style="left:1337.75px;top:866.35px;font-size:21.00px;line-height:27.30px;font-weight:700;color:#e0323e;letter-spacing:-0.581px;">matrixis_hd</span>
<span id="t43" class="t" style="left:1449.75px;top:866.35px;font-size:21.00px;line-height:27.30px;font-weight:400;color:#ececec;letter-spacing:-0.344px;">: nimm halt kms key</span>
<svg class="b" style="left:1277.25px;top:899.75px;" width="26.50" height="25.00" viewBox="0 0 20 18"><rect x="0" y="0" width="20" height="18" rx="2" fill="#2a9fd8"/><path d="M3.5,13.5 L3,6 L7,9 L10,4.5 L13,9 L17,6 L16.5,13.5 Z" fill="#fff"/><rect x="3.5" y="14" width="13" height="1.4" fill="#fff"/></svg>
<span id="t44" class="t" style="left:1307.50px;top:898.10px;font-size:21.00px;line-height:27.30px;font-weight:700;color:#9fd028;letter-spacing:-0.361px;">enrixxel</span>
<span id="t45" class="t" style="left:1384.50px;top:898.10px;font-size:21.00px;line-height:27.30px;font-weight:400;color:#ececec;letter-spacing:-0.325px;">: oder Twitter DMs ?</span>
<svg class="b" style="left:1277.25px;top:932.25px;" width="26.50" height="25.00" viewBox="0 0 20 18"><rect x="0" y="0" width="20" height="18" rx="2" fill="#2a9fd8"/><path d="M3.5,13.5 L3,6 L7,9 L10,4.5 L13,9 L17,6 L16.5,13.5 Z" fill="#fff"/><rect x="3.5" y="14" width="13" height="1.4" fill="#fff"/></svg>
<span id="t46" class="t" style="left:1307.50px;top:931.35px;font-size:21.00px;line-height:27.30px;font-weight:700;color:#2a9ae0;letter-spacing:-0.414px;">der_teig_ist_erfroren_gj</span>
<span id="t47" class="t" style="left:1538.50px;top:931.35px;font-size:21.00px;line-height:27.30px;font-weight:400;color:#ececec;">:</span>
<span id="t48" class="t" style="left:1277.50px;top:957.43px;font-size:20.50px;line-height:26.65px;font-weight:400;color:#ececec;letter-spacing:-0.122px;">also was die gemacht haben ist, dass sie vor die ganzen alten</span>
<span id="t49" class="t" style="left:1277.50px;top:980.17px;font-size:20.50px;line-height:26.65px;font-weight:400;color:#ececec;letter-spacing:-0.139px;">fenster noch ein neues fenster mit buttons zu den alten fenstern</span>
<span id="t50" class="t" style="left:1277.50px;top:1017.17px;font-size:20.50px;line-height:26.65px;font-weight:400;color:#ececec;letter-spacing:-0.232px;">gepackt haben</span>
<svg class="b" style="left:1416.00px;top:1004.00px;" width="32.50" height="41.00" viewBox="0 0 26 33"><path d="M2,15 C2,5 8,1 15,1 C22,1 25,7 24,14 C24,21 23,27 21,33 L4,33 C3,27 2,21 2,15 Z" fill="#b8b84a"/><path d="M4,15 C4,6 9,3 15,3 C20,3 23,7 22,14 C22,18 21,22 20,25 L6,25 C5,22 4,19 4,15 Z" fill="#3c3a1e"/><path d="M9,14 C9,10 12,8 15,8 C19,8 21,11 20,15 C20,20 18,24 15,25 C11,24 9,19 9,14 Z" fill="#e6d6bc"/><path d="M5,24 C9,21 14,23 15,28 L15,33 L5,33 Z" fill="#f0e4cc"/><path d="M8,12 C11,7 18,6 22,11 C18,9 12,9 8,12 Z" fill="#2a2812"/></svg>
</div></div></body></html>
